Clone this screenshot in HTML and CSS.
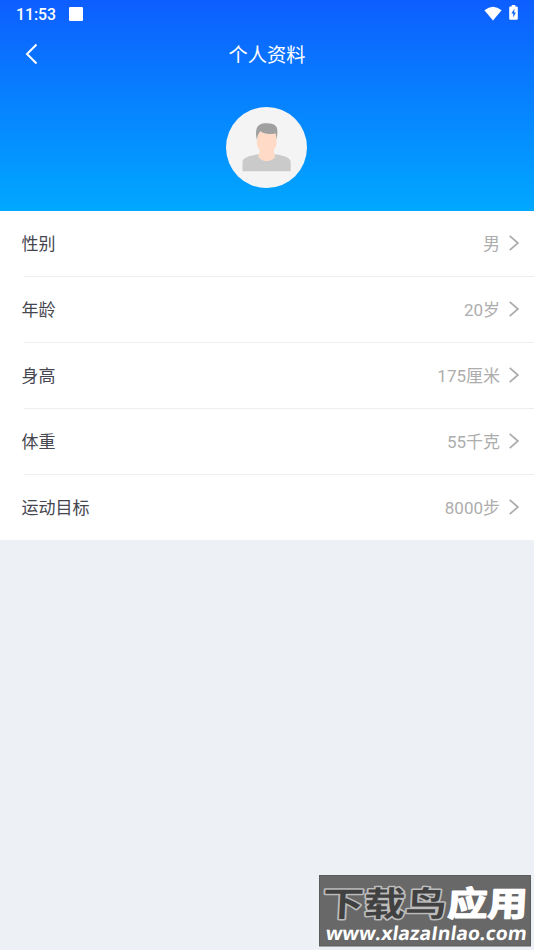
FILE: index.html
```html
<!DOCTYPE html>
<html lang="zh-CN">
<head>
<meta charset="utf-8">
<title>个人资料</title>
<link rel="stylesheet" href="styles.css">
</head>
<body>
<header class="header">
  <div class="status">
    <span class="time">11:53</span><i class="square"></i>
    <svg class="wifi" width="18" height="15" viewBox="0 0 18 15"><path d="M.4 4.200Q9-2.800 17.600 4.200L9 14.500z" fill="#fff"/></svg>
    <svg class="battery" width="9" height="15" viewBox="0 0 9 15"><path d="M2.700 0h3.600v1.600h1.500q1 0 1 1v11.100q0 1-1 1H1.200q-1 0-1-1V2.600q0-1 1-1h1.500z" fill="#fff"/><path d="M5.500 3.700 2.300 8.600h1.900v4l2.700-5H5.200z" fill="#1268f4"/></svg>
  </div>
  <nav class="nav">
    <svg class="back" width="14" height="22" viewBox="0 0 14 22"><path d="M12.500 1.500 3 11l9.500 9.500" fill="none" stroke="#fff" stroke-width="2"/></svg>
    <h1 class="title">个人资料</h1>
  </nav>
  <svg class="avatar" width="81" height="81" viewBox="0 0 81 81">
    <circle cx="40.500" cy="40.500" r="40.500" fill="#f4f4f4"/>
    <path d="M16.500 64.300V55C16.500 50 26 48 33 47.300H48C55 48 64.700 50 64.700 55V64.300z" fill="#cacaca"/>
    <path d="M31.200 25H50.300V33C51.300 37 50 40.500 47.900 42.500V47.500L49.500 48.800C48 52.500 45 54 40.800 54S33.500 52.500 32 48.800L33.500 47.500V42.500C31.500 40.500 30.200 37 31.200 33z" fill="#ffdac7"/>
    <path d="M31 33C29.700 28 29.500 22 32 19C34 16.700 37 16.200 41 16.200C45.500 16.200 48.500 17 50.200 19.500C52 22 51.500 28 50.500 33C50.500 30 50.200 28 49.300 26.200C44 28 38 27 34.500 24.300C32.200 26.500 31.300 29 31 33z" fill="#a0a0a0"/>
  </svg>
</header>
<main class="list">
  <div class="row"><span class="label">性别</span><span class="value">男</span><svg class="arrow" viewBox="0 0 10 16"><path d="m.7.8 8.200 7.200-8.200 7.200"/></svg></div>
  <div class="row"><span class="label">年龄</span><span class="value">20岁</span><svg class="arrow" viewBox="0 0 10 16"><path d="m.7.8 8.200 7.200-8.200 7.200"/></svg></div>
  <div class="row"><span class="label">身高</span><span class="value">175厘米</span><svg class="arrow" viewBox="0 0 10 16"><path d="m.7.8 8.200 7.200-8.200 7.200"/></svg></div>
  <div class="row"><span class="label">体重</span><span class="value">55千克</span><svg class="arrow" viewBox="0 0 10 16"><path d="m.7.8 8.200 7.200-8.200 7.200"/></svg></div>
  <div class="row"><span class="label">运动目标</span><span class="value">8000步</span><svg class="arrow" viewBox="0 0 10 16"><path d="m.7.8 8.200 7.200-8.200 7.200"/></svg></div>
</main>
<svg class="watermark" width="212" height="72" viewBox="0 0 212 72">
  <rect x=".5" y=".5" width="211" height="70.500" fill="#686868" stroke="#5b5b5b"/>
  <g class="brand" transform="translate(3 41) skewX(-3)">
    <text class="brand-dark" x="0" y="0" textLength="124" lengthAdjust="spacingAndGlyphs">下载鸟</text>
    <text class="brand-light" x="125" y="0" textLength="80" lengthAdjust="spacingAndGlyphs">应用</text>
  </g>
  <text class="site" transform="translate(6 65) skewX(-8)" textLength="201" lengthAdjust="spacingAndGlyphs">www.xlazaInlao.com</text>
</svg>
</body>
</html>
```
FILE: styles.css
```css
* { box-sizing: border-box; }
body {
  margin: 0;
  height: 950px;
  overflow: hidden;
  background: #edf1f5;
  font-family: Roboto, "Noto Sans CJK SC", sans-serif;
}
.header {
  height: 211px;
  display: flex;
  flex-direction: column;
  align-items: center;
  background: linear-gradient(#0d5eff, #00a8ff);
  color: #fff;
}
.status {
  width: 100%;
  height: 28px;
  padding: 0 16px 0 16px;
  display: flex;
  align-items: center;
}
.time { width: 40px; font-size: 15.800px; font-weight: 500; }
.square { width: 14px; height: 14px; margin-left: 13px; border-radius: 1px; background: #fff; }
.wifi { margin: 0 7px 2px auto; }
.battery { margin-bottom: 3px; }
.nav {
  width: 100%;
  height: 51px;
  display: grid;
  grid-template-columns: 60px 1fr 60px;
  align-items: center;
}
.back { margin-left: 24px; }
.title { margin: 0; padding-top: 4px; text-align: center; font-size: 19.300px; font-weight: 400; line-height: 28px; }
.avatar { margin: 28px 1px 0 0; }
.list { background: #fff; }
.row {
  height: 66px;
  margin-left: 24px;
  padding-right: 15px;
  display: flex;
  align-items: center;
  border-bottom: 1px solid #eee;
  font-size: 17px;
}
.row:first-child { height: 65.500px; }
.row:last-child { height: 65.500px; border-bottom: 0; }
.label { margin-left: -2.500px; padding-bottom: 2px; color: #45464f; }
.value { margin-left: auto; padding-bottom: 2px; color: #adadad; }
.arrow { width: 10px; height: 16px; margin-left: 9px; }
.arrow path { fill: none; stroke: #acacac; stroke-width: 1.700; }
.watermark { position: absolute; left: 319px; top: 875px; }
.brand { font: 700 34px "Noto Sans CJK SC", sans-serif; paint-order: stroke; stroke-linejoin: round; }
.brand-dark { fill: #414141; stroke: #bcbcbc; stroke-width: 3px; }
.brand-light { fill: #fff; stroke: #fff; stroke-width: 1.400px; }
.site { font: 700 19px "Open Sans", sans-serif; fill: #fff; }
```
